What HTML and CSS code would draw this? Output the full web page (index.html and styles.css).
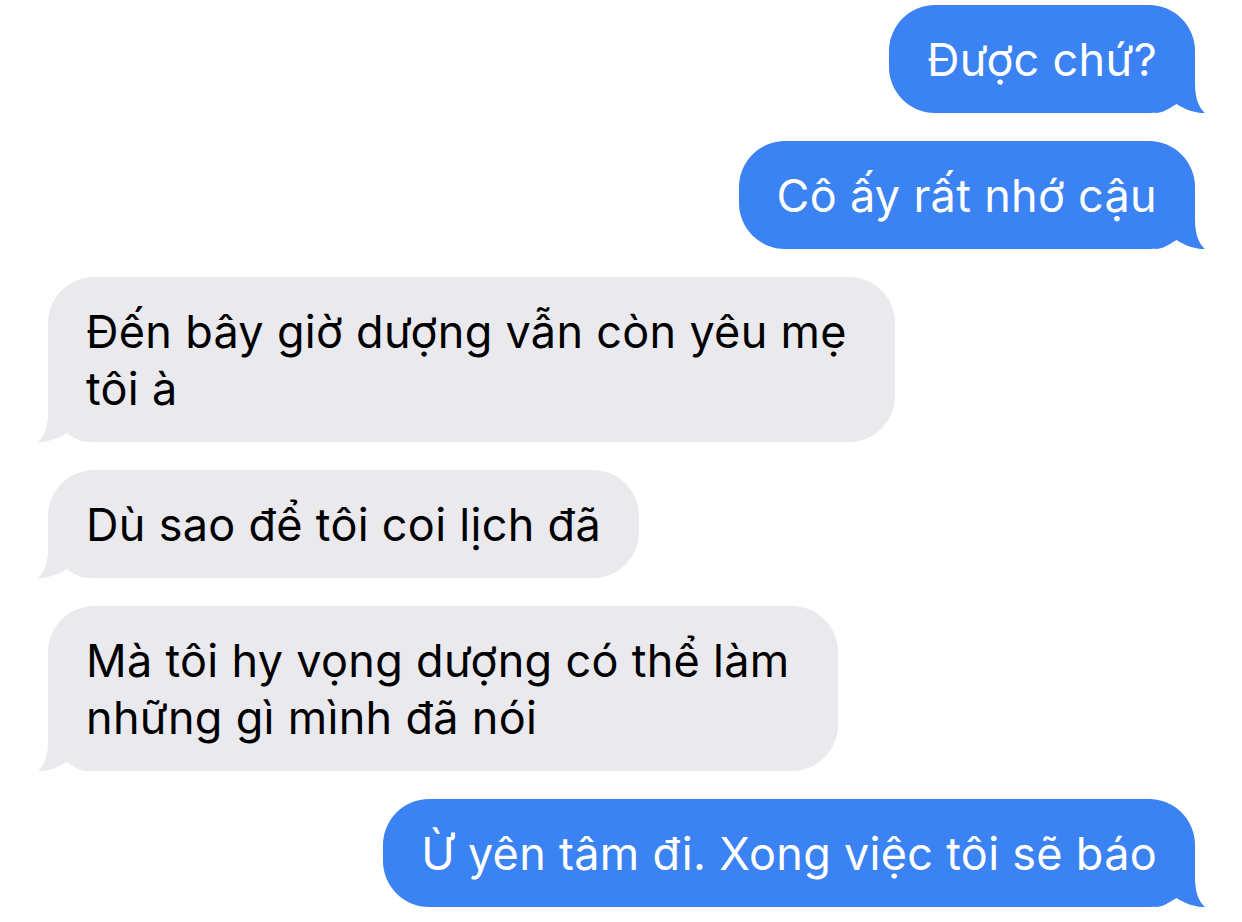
FILE: index.html
```html
<!DOCTYPE html>
<html lang="vi">
<head>
<meta charset="utf-8">
<title>Messages</title>
<link rel="stylesheet" href="styles.css">
</head>
<body>
<main class="thread">
  <div class="msg me">Được chứ?<svg class="tail" viewBox="0 0 50 50" width="50" height="50"><path d="M0 0H40V20C40 34 43 44 50 50C42 50.5 30 47 20 40C14 46 8 50 0 50Z"/></svg></div>
  <div class="msg me">Cô ấy rất nhớ cậu<svg class="tail" viewBox="0 0 50 50" width="50" height="50"><path d="M0 0H40V20C40 34 43 44 50 50C42 50.5 30 47 20 40C14 46 8 50 0 50Z"/></svg></div>
  <div class="msg them wrap">Đến bây giờ dượng vẫn còn yêu mẹ<br>tôi à<svg class="tail" viewBox="0 0 50 50" width="50" height="50"><path d="M0 0H40V20C40 34 43 44 50 50C42 50.5 30 47 20 40C14 46 8 50 0 50Z"/></svg></div>
  <div class="msg them">Dù sao để tôi coi lịch đã<svg class="tail" viewBox="0 0 50 50" width="50" height="50"><path d="M0 0H40V20C40 34 43 44 50 50C42 50.5 30 47 20 40C14 46 8 50 0 50Z"/></svg></div>
  <div class="msg them wrap">Mà tôi hy vọng dượng có thể làm<br>những gì mình đã nói<svg class="tail" viewBox="0 0 50 50" width="50" height="50"><path d="M0 0H40V20C40 34 43 44 50 50C42 50.5 30 47 20 40C14 46 8 50 0 50Z"/></svg></div>
  <div class="msg me">Ừ yên tâm đi. Xong việc tôi sẽ báo<svg class="tail" viewBox="0 0 50 50" width="50" height="50"><path d="M0 0H40V20C40 34 43 44 50 50C42 50.5 30 47 20 40C14 46 8 50 0 50Z"/></svg></div>
</main>
</body>
</html>
```
FILE: styles.css
```css
html, body {
  margin: 0;
  padding: 0;
  background: #ffffff;
}

body {
  font-family: "Inter", "Noto Sans", "Liberation Sans", sans-serif;
  width: 1242px;
  height: 922px;
  overflow: hidden;
}

.thread {
  display: flex;
  flex-direction: column;
  gap: 28px;
  padding: 5px 47px 0 48px;
}

.msg {
  position: relative;
  padding: 25.5px 38px;
  font-size: 45px;
  line-height: 57px;
  letter-spacing: 0.3px;
  border-radius: 46px;
  white-space: nowrap;
}

.msg.wrap {
  padding-right: 48px;
}

.me {
  align-self: flex-end;
  background: #3b82f2;
  color: #ffffff;
}

.them {
  align-self: flex-start;
  background: #e9e9ee;
  color: #000000;
}

.tail {
  position: absolute;
  bottom: 0;
  display: block;
}

.me .tail {
  right: -10px;
  fill: #3b82f2;
}

.them .tail {
  left: -10px;
  fill: #e9e9ee;
  transform: scaleX(-1);
}
```
